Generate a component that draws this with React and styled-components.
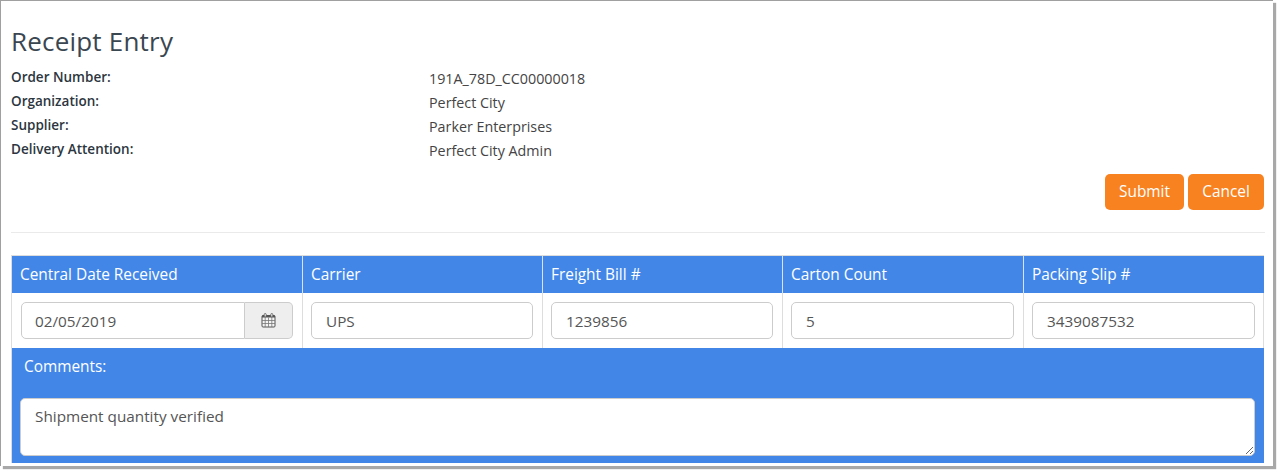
import React from "react";
import styled, { createGlobalStyle } from "styled-components";

const GlobalStyle = createGlobalStyle`
  html, body {
    margin: 0;
    padding: 0;
    background: #fff;
    min-height: 100vh;
  }
  body {
    font-family: "Open Sans", "Liberation Sans", sans-serif;
    color: #333;
  }
`;

const Frame = styled.div`
  box-sizing: border-box;
  width: 1273px;
  height: 466px;
  background: #fff;
  border-top: 1px solid #a0a0a0;
  border-left: 1px solid #a0a0a0;
  box-shadow: 3px 3px 1px #a8a8a8;
  padding: 0 8px 0 10px;
  overflow: hidden;
`;

const Title = styled.h1`
  font-size: 26px;
  font-weight: 400;
  line-height: 36px;
  color: #3a4650;
  margin: 22px 0 7px;
  letter-spacing: 0.2px;
`;

const Details = styled.dl`
  display: grid;
  grid-template-columns: 418px 1fr;
  grid-auto-rows: 24px;
  margin: 0;
`;

const Label = styled.dt`
  font-weight: 600;
  color: #2c3640;
  font-size: 13.5px;
  line-height: 22px;
  height: 24px;
`;

const Value = styled.dd`
  margin: 0;
  color: #444;
  font-size: 14.3px;
  line-height: 24px;
  padding-top: 1px;
`;

const Actions = styled.div`
  display: flex;
  justify-content: flex-end;
  gap: 4px;
  margin-top: 12px;
  padding-right: 1px;
`;

const ActionButton = styled.button`
  height: 36px;
  width: ${({ $w }) => $w}px;
  border: none;
  border-radius: 5px;
  background: #f98220;
  color: #fff;
  font-family: inherit;
  font-size: 15.4px;
  padding: 0 0 2px;
`;

const Divider = styled.hr`
  border: none;
  border-top: 1px solid #eaeaea;
  margin: 22px 0 22px;
`;

const EntryTable = styled.div`
  box-sizing: border-box;
  width: 1253px;
  border-top: 1px solid #ddd;
  border-left: 1px solid #ddd;
`;

const Row = styled.div`
  display: grid;
  grid-template-columns: 290px 240px 240px 241px 241px;
`;

const HeadCell = styled.div`
  box-sizing: border-box;
  height: 37px;
  background: #4287e8;
  color: #fff;
  font-size: 15.4px;
  line-height: 37px;
  padding-left: 8px;
  border-left: ${({ $first }) => ($first ? "none" : "1px solid #d8e4f5")};
`;

const InputCell = styled.div`
  box-sizing: border-box;
  height: 55px;
  padding: 9px ${({ $last }) => ($last ? 8 : 9)}px 0 ${({ $first }) => ($first ? 9 : 8)}px;
  border-left: ${({ $first }) => ($first ? "none" : "1px solid #ddd")};
  border-right: ${({ $last }) => ($last ? "1px solid #ddd" : "none")};
`;

const TextInput = styled.input`
  box-sizing: border-box;
  display: block;
  width: 100%;
  height: 37px;
  border: 1px solid #ccc;
  border-radius: ${({ $joined }) => ($joined ? "5px 0 0 5px" : "5px")};
  padding: 0 ${({ $joined }) => ($joined ? 13 : 14)}px;
  font-family: inherit;
  font-size: 15.3px;
  color: #555;
  background: #fff;
  outline: none;
`;

const DateGroup = styled.div`
  display: flex;
`;

const CalendarButton = styled.div`
  box-sizing: border-box;
  flex: 0 0 48px;
  height: 37px;
  display: flex;
  align-items: center;
  justify-content: center;
  background: #eee;
  border: 1px solid #ccc;
  border-left: none;
  border-radius: 0 5px 5px 0;
`;

const CommentsPanel = styled.div`
  box-sizing: border-box;
  height: 115px;
  background: #4287e8;
  padding: 0 9px 7px 8px;
  display: flex;
  flex-direction: column;
`;

const CommentsLabel = styled.div`
  color: #fff;
  font-size: 15.4px;
  line-height: 38px;
  padding-left: 4px;
  height: 50px;
`;

const CommentsBox = styled.textarea`
  box-sizing: border-box;
  display: block;
  width: 100%;
  height: 58px;
  border: 1px solid #ccc;
  border-radius: 5px;
  padding: 7px 14px;
  font-family: inherit;
  font-size: 15.3px;
  color: #555;
  background: #fff;
  outline: none;
  resize: vertical;
`;

const CalendarIcon = () => (
  <svg width="15" height="15" viewBox="0 0 15 15" fill="none">
    <rect x="1" y="2.5" width="13" height="11.5" rx="1" fill="#f4f4f4" stroke="#555" />
    <rect x="1" y="2.5" width="13" height="2" fill="#555" />
    <path d="M1 7.5h13M1 10.5h13M4.2 4.5V14M7.5 4.5V14M10.8 4.5V14" stroke="#777" strokeWidth="0.8" />
    <rect x="3.2" y="0.5" width="2" height="3.5" rx="1" fill="#eee" stroke="#555" strokeWidth="0.8" />
    <rect x="9.8" y="0.5" width="2" height="3.5" rx="1" fill="#eee" stroke="#555" strokeWidth="0.8" />
  </svg>
);

const details = [
  ["Order Number:", "191A_78D_CC00000018"],
  ["Organization:", "Perfect City"],
  ["Supplier:", "Parker Enterprises"],
  ["Delivery Attention:", "Perfect City Admin"],
];

const columns = ["Central Date Received", "Carrier", "Freight Bill #", "Carton Count", "Packing Slip #"];

const App = () => {
  return (
    <>
      <GlobalStyle />
      <Frame>
        <Title>Receipt Entry</Title>
        <Details>
          {details.map(([label, value]) => (
            <React.Fragment key={label}>
              <Label>{label}</Label>
              <Value>{value}</Value>
            </React.Fragment>
          ))}
        </Details>
        <Actions>
          <ActionButton $w={79}>Submit</ActionButton>
          <ActionButton $w={76}>Cancel</ActionButton>
        </Actions>
        <Divider />
        <EntryTable>
          <Row>
            {columns.map((c, i) => (
              <HeadCell key={c} $first={i === 0}>
                {c}
              </HeadCell>
            ))}
          </Row>
          <Row>
            <InputCell $first>
              <DateGroup>
                <TextInput $joined defaultValue="02/05/2019" />
                <CalendarButton>
                  <CalendarIcon />
                </CalendarButton>
              </DateGroup>
            </InputCell>
            <InputCell>
              <TextInput defaultValue="UPS" />
            </InputCell>
            <InputCell>
              <TextInput defaultValue="1239856" />
            </InputCell>
            <InputCell>
              <TextInput defaultValue="5" />
            </InputCell>
            <InputCell $last>
              <TextInput defaultValue="3439087532" />
            </InputCell>
          </Row>
          <CommentsPanel>
            <CommentsLabel>Comments:</CommentsLabel>
            <CommentsBox defaultValue="Shipment quantity verified" />
          </CommentsPanel>
        </EntryTable>
      </Frame>
    </>
  );
};

export default App;
